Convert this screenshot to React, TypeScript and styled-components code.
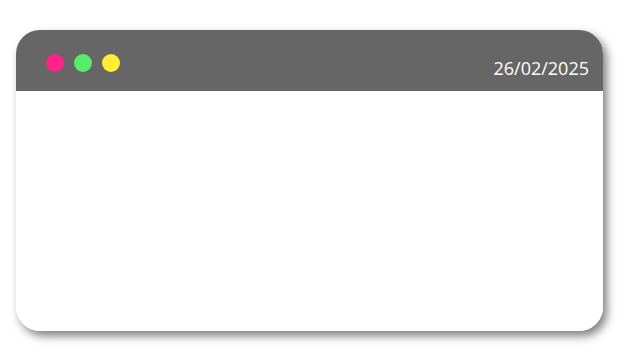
import React from 'react';
import styled, { createGlobalStyle } from 'styled-components';

const GlobalStyle = createGlobalStyle`
  html, body {
    margin: 0;
    padding: 0;
    background: #ffffff;
  }
  body {
    font-family: 'Open Sans', 'DejaVu Sans', sans-serif;
  }
`;

const Page = styled.div`
  width: 626px;
  height: 354px;
  padding: 30px 23px 23px 16px;
  box-sizing: border-box;
`;

const Window = styled.div`
  width: 587px;
  height: 301px;
  border-radius: 24px;
  background: #ffffff;
  overflow: hidden;
  display: flex;
  flex-direction: column;
  box-shadow: 4px 5px 10px rgba(0, 0, 0, 0.5);
`;

const TitleBar = styled.div`
  height: 61px;
  flex-shrink: 0;
  background: #666666;
  display: flex;
  align-items: center;
  justify-content: space-between;
  padding: 4px 14px 0 30px;
  box-sizing: border-box;
`;

const Dots = styled.div`
  display: flex;
  gap: 10px;
  margin-top: 1px;
`;

const Dot = styled.span<{ $color: string }>`
  width: 18px;
  height: 18px;
  border-radius: 50%;
  background: ${props => props.$color};
`;

const DateLabel = styled.div`
  color: #ffffff;
  font-size: 18px;
  line-height: 24px;
  margin-top: 11px;
`;

const Content = styled.div`
  flex: 1;
  background: #ffffff;
`;

export default function App() {
  return (
    <>
      <GlobalStyle />
      <Page>
        <Window>
          <TitleBar>
            <Dots>
              <Dot $color="#ff2288" />
              <Dot $color="#55ee66" />
              <Dot $color="#ffee33" />
            </Dots>
            <DateLabel>26/02/2025</DateLabel>
          </TitleBar>
          <Content />
        </Window>
      </Page>
    </>
  );
}
